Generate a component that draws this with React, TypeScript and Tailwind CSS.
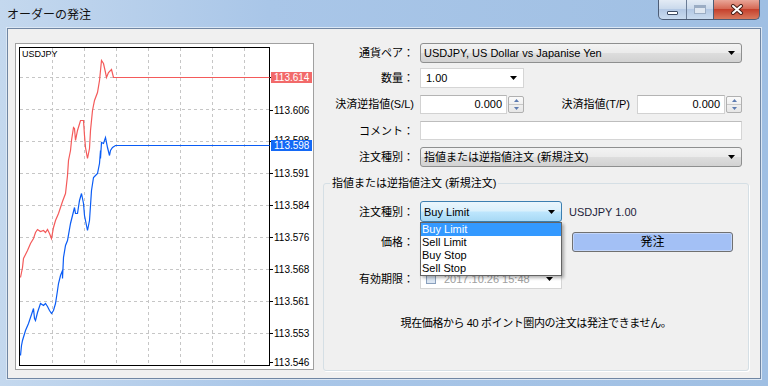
const RED = [[20,277],[22,267],[23,258],[27,250],[30,243],[33,238],[35,232],[37,229],[40,231],[43,230],[45,232],[47,229],[49,233],[51,238],[53,227],[55,220],[58,213],[60,207],[62,201],[65,193],[67,175],[68,160],[70,150],[71,140],[73,127],[74,128],[75,140],[77,130],[80,120],[83,120],[84,135],[85,147],[87,158],[89,148],[90,130],[92,110],[94,100],[97,92],[99,80],[100,70],[101,60],[103,63],[105,72],[106,77],[108,72],[111,69],[113,77],[269,77]];

const BLUE = [[20,355],[21,345],[22,340],[25,330],[28,323],[30,317],[33,308],[34,318],[35,320],[37,312],[40,303],[43,305],[45,303],[47,306],[49,310],[51,313],[53,310],[55,303],[57,290],[58,283],[60,275],[62,270],[62,278],[63,257],[65,245],[67,240],[70,223],[72,215],[74,207],[75,213],[77,213],[79,200],[81,193],[82,198],[83,203],[84,215],[85,220],[87,230],[89,220],[90,205],[91,190],[93,177],[95,175],[97,173],[99,163],[100,150],[100,158],[101,142],[103,143],[105,137],[107,147],[109,155],[110,150],[112,147],[115,145],[269,145]];

const H_GRID = [77, 109, 141, 173, 205, 237, 269, 301, 333];
const V_GRID = [52, 84, 116, 148, 180, 212, 244];
const PRICES: [string, number][] = [
  ['113.606', 110],
  ['113.598', 140],
  ['113.591', 173],
  ['113.584', 205],
  ['113.576', 237],
  ['113.568', 269],
  ['113.561', 301],
  ['113.553', 333],
  ['113.546', 362],
];

const ORDER_TYPES = ['Buy Limit', 'Sell Limit', 'Buy Stop', 'Sell Stop'];

function pts(list: number[][]) {
  return list.map(([x, y]) => `${x + 0.5},${y + 0.5}`).join(' ');
}

function Arrow() {
  return (
    <svg width="7" height="4" viewBox="0 0 7 4" className="shrink-0">
      <path d="M0 0h7L3.5 4z" fill="#000" />
    </svg>
  );
}

function Spinner() {
  return (
    <div className="ml-px flex h-[17px] w-[16px] flex-col rounded-[2px] border border-[#b0b0b0] bg-[linear-gradient(#fafafa,#e6e6e6)]">
      <div className="flex flex-1 items-center justify-center border-b border-[#c8c8c8]">
        <svg width="5" height="3" viewBox="0 0 5 3"><path d="M0 3h5L2.5 0z" fill="#5d7bb0" /></svg>
      </div>
      <div className="flex flex-1 items-center justify-center">
        <svg width="5" height="3" viewBox="0 0 5 3"><path d="M0 0h5L2.5 3z" fill="#5d7bb0" /></svg>
      </div>
    </div>
  );
}

function NumberField({ width }: { width: string }) {
  return (
    <div className="flex items-center">
      <div className={`flex h-[19px] items-center justify-end border border-[#d2d2d2] border-t-[#b4b4b4] bg-white pr-[4px] ${width}`}>
        0.000
      </div>
      <Spinner />
    </div>
  );
}

function CaptionButtons() {
  return (
    <div className="mr-[8px] flex h-[20px]">
      <div className="flex h-full overflow-hidden rounded-bl-[5px] border border-t-0 border-[#4d5d76] bg-[linear-gradient(#e3ebf5,#cbdaec_45%,#b3c8e4_50%,#c9dbef)]">
        <div className="flex w-[28px] items-center justify-center border-r border-[#6a7c96]">
          <div className="mt-[6px] h-[4px] w-[11px] rounded-[1px] border border-[#3d4b62] bg-white" />
        </div>
        <div className="flex w-[26px] items-center justify-center">
          <div className="h-[9px] w-[12px] border border-[#9badc4] border-t-[3px] bg-[#dfe7f1]" />
        </div>
      </div>
      <div className="flex w-[46px] items-center justify-center rounded-br-[5px] border border-l-0 border-t-0 border-[#4d5d76] bg-[linear-gradient(#e9a698,#d66a56_45%,#c5412d_50%,#d87a5e)]">
        <svg width="14" height="11" viewBox="0 0 14 11">
          <path d="M3 2l8 7M11 2l-8 7" stroke="#4a2018" strokeWidth="4" strokeLinecap="round" />
          <path d="M3 2l8 7M11 2l-8 7" stroke="#fff" strokeWidth="2" strokeLinecap="round" />
        </svg>
      </div>
    </div>
  );
}

function Chart() {
  return (
    <div className="h-[327px] w-[299px] shrink-0 border border-[#a0a0a0] bg-white">
      <svg width="297" height="325" viewBox="16 44 297 325" className="block" fontFamily="'Liberation Sans', sans-serif">
        {H_GRID.map((y) => (
          <line key={'h' + y} x1="20" x2="269" y1={y + 0.5} y2={y + 0.5} stroke="#c6c6c6" strokeDasharray="3 3" />
        ))}
        {V_GRID.map((x) => (
          <line key={'v' + x} x1={x + 0.5} x2={x + 0.5} y1="48" y2="365" stroke="#c6c6c6" strokeDasharray="3 3" />
        ))}
        <rect x="19.5" y="47.5" width="250" height="318" fill="none" stroke="#000" />
        <text x="22" y="57" fontSize="9" fill="#000">USDJPY</text>

        <polyline points={pts(RED)} fill="none" stroke="#f45a5a" strokeWidth="1.2" strokeLinejoin="miter" />
        <polyline points={pts(BLUE)} fill="none" stroke="#0a5cf5" strokeWidth="1.2" strokeLinejoin="miter" />

        {[77, 110, 141, 173, 205, 237, 269, 301, 333, 362].map((y) => (
          <line key={'t' + y} x1="270" x2="273" y1={y + 0.5} y2={y + 0.5} stroke="#000" />
        ))}
        {PRICES.map(([p, y]) => (
          <text key={p + y} x="274" y={y + 3.5} fontSize="10" fill="#000">{p}</text>
        ))}
        <rect x="271" y="72" width="41" height="11" fill="#f26a6a" />
        <text x="274" y="81" fontSize="10" fill="#fff">113.614</text>
        <rect x="271" y="140" width="41" height="11" fill="#1469f6" />
        <text x="274" y="149" fontSize="10" fill="#fff">113.598</text>
      </svg>
    </div>
  );
}

export default function App() {
  return (
    <div className="flex h-[386px] w-[768px] flex-col overflow-hidden bg-[linear-gradient(90deg,#c4d8ee,#a9c6e8_35%,#9fbfe3)] font-['Liberation_Sans','Noto_Sans_CJK_JP',sans-serif] text-[11px] leading-[14px] text-black">
      {/* title bar */}
      <div className="flex h-[28px] shrink-0 items-start justify-between">
        <div className="pl-[7px] pt-[6px] font-['Noto_Sans_CJK_JP',sans-serif] text-[12px] leading-[16px] text-[#111]">オーダーの発注</div>
        <CaptionButtons />
      </div>

      {/* client area */}
      <div className="mx-[7px] flex h-[351px] shrink-0 items-start border border-[#7086a3] bg-[#f0f0f0] pl-[7px] pt-[14px] shadow-[0_0_0_1px_#dbe7f4]">
        <Chart />

        <div className="ml-[9px] flex w-[426px] flex-col">
          <div className="flex h-[20px] items-center">
            <div className="w-[91px] text-right">通貨ペア：</div>
            <div className="ml-[6px] flex h-[20px] w-[322px] items-center justify-between rounded-[3px] border border-[#8e8f8f] bg-[linear-gradient(#f3f3f3,#ebebeb_48%,#dddddd_52%,#d2d2d2)] pl-[3px] pr-[6px]">
              <span>USDJPY, US Dollar vs Japanise Yen</span>
              <Arrow />
            </div>
          </div>

          <div className="mt-[5px] flex h-[20px] items-center">
            <div className="w-[91px] text-right">数量：</div>
            <div className="ml-[6px] flex h-[20px] w-[104px] items-center justify-between border border-[#d5d5d5] bg-white pl-[5px] pr-[6px]">
              <span>1.00</span>
              <Arrow />
            </div>
          </div>

          <div className="mt-[6px] flex h-[20px] items-center">
            <div className="w-[91px] whitespace-nowrap text-right">決済逆指値(S/L)</div>
            <div className="ml-[6px]">
              <NumberField width="w-[87px]" />
            </div>
            <div className="w-[106px] whitespace-nowrap text-right">決済指値(T/P)</div>
            <div className="ml-[7px]">
              <NumberField width="w-[88px]" />
            </div>
          </div>

          <div className="mt-[7px] flex h-[19px] items-center">
            <div className="w-[91px] text-right">コメント：</div>
            <div className="ml-[6px] h-[19px] w-[322px] border border-[#d5d5d5] border-t-[#bdbdbd] bg-white" />
          </div>

          <div className="mt-[7px] flex h-[20px] items-center">
            <div className="w-[91px] text-right">注文種別：</div>
            <div className="ml-[6px] flex h-[20px] w-[322px] items-center justify-between rounded-[3px] border border-[#8e8f8f] bg-[linear-gradient(#f3f3f3,#ebebeb_48%,#dddddd_52%,#d2d2d2)] pl-[3px] pr-[6px]">
              <span>指値または逆指値注文 (新規注文)</span>
              <Arrow />
            </div>
          </div>

          <fieldset className="mt-[9px] h-[195px] rounded-[3px] border border-[#d5dfe5] shadow-[1px_1px_0_#fff]">
            <legend className="ml-[6px] px-[2px] leading-[14px]">指値または逆指値注文 (新規注文)</legend>

            <div className="mt-[11px] flex h-[21px] items-center">
              <div className="w-[90px] text-right">注文種別：</div>
              <div className="relative ml-[6px]">
                <div className="flex h-[21px] w-[142px] items-center justify-between rounded-[3px] border border-[#3c7fb1] bg-[linear-gradient(#eaf6fd,#d9f0fc_48%,#bee6fd_52%,#a7d9f5)] pl-[3px] pr-[6px]">
                  <span>Buy Limit</span>
                  <Arrow />
                </div>
                <div className="absolute left-0 top-full z-10 w-[142px] border border-[#646464] bg-white shadow-[2px_2px_3px_rgba(0,0,0,0.3)]">
                  {ORDER_TYPES.map((t, i) => (
                    <div key={t} className={`h-[13px] pl-[1px] text-[11px] leading-[13px] ${i === 0 ? 'bg-[#3399ff] text-white' : 'text-black'}`}>
                      {t}
                    </div>
                  ))}
                </div>
              </div>
              <div className="ml-[7px] text-[#1d1d3a]">USDJPY 1.00</div>
            </div>

            <div className="mt-[10px] flex h-[20px] items-center">
              <div className="w-[90px] text-right">価格：</div>
              <div className="ml-[6px] h-[20px] w-[142px] border border-[#d5d5d5] bg-white" />
              <div className="ml-[10px] flex h-[20px] w-[161px] items-center justify-center rounded-[3px] border border-[#707070] bg-[#a3c0f5] text-[12px] shadow-[inset_0_0_0_1px_#c3d6fa]">
                発注
              </div>
            </div>

            <div className="mt-[17px] flex h-[20px] items-center">
              <div className="w-[90px] text-right">有効期限：</div>
              <div className="ml-[6px] flex h-[20px] w-[142px] items-center border border-[#d5d5d5] bg-white pl-[5px] pr-[8px]">
                <div className="h-[10px] w-[10px] border border-[#8aa0bd] bg-[#dbe6f3]" />
                <span className="ml-[8px] flex-1 text-[#a0a0a0]">2017.10.26 15:48</span>
                <Arrow />
              </div>
            </div>

            <div className="mt-[27px] text-center leading-[14px] tracking-[-0.4px]">
              現在価格から 40 ポイント圏内の注文は発注できません。
            </div>
          </fieldset>
        </div>
      </div>
    </div>
  );
}
